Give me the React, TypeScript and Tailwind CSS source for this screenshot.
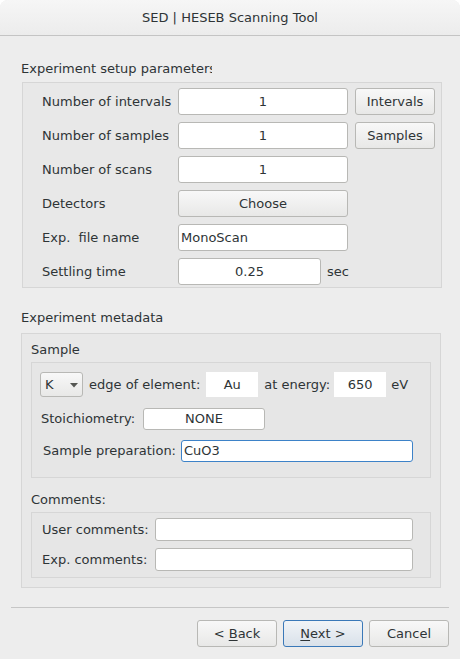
import type { ReactNode } from "react";

type Row = {
  label: string;
  value: string;
  width: number;
  kind: "field" | "button";
  align?: "center" | "left";
  extra?: ReactNode;
};

function Field({
  w,
  h,
  children,
  left,
  focus,
}: {
  w: number;
  h: number;
  children?: ReactNode;
  left?: boolean;
  focus?: boolean;
}) {
  return (
    <div
      className={
        "flex items-center rounded-[3px] border bg-white " +
        (focus ? "border-[#3d82c8] " : "border-[#b8b8b5] ") +
        (left ? "justify-start pl-[2px]" : "justify-center")
      }
      style={{ width: w, height: h }}
    >
      {children}
    </div>
  );
}

function Btn({
  w,
  h,
  children,
  primary,
}: {
  w: number;
  h: number;
  children: ReactNode;
  primary?: boolean;
}) {
  return (
    <div
      className={
        "flex items-center justify-center rounded-[3px] border " +
        (primary
          ? "border-[#3a78b8] bg-linear-to-b from-[#f1f4f7] to-[#d9e1ea]"
          : "border-[#b8b8b5] bg-linear-to-b from-[#f8f8f8] to-[#e8e8e7]")
      }
      style={{ width: w, height: h }}
    >
      {children}
    </div>
  );
}

export default function App() {
  const rows: Row[] = [
    { label: "Number of intervals", value: "1", width: 170, kind: "field", extra: <div className="ml-[7px]"><Btn w={80} h={27}>Intervals</Btn></div> },
    { label: "Number of samples", value: "1", width: 170, kind: "field", extra: <div className="ml-[7px]"><Btn w={80} h={27}>Samples</Btn></div> },
    { label: "Number of scans", value: "1", width: 170, kind: "field" },
    { label: "Detectors", value: "Choose", width: 170, kind: "button" },
    { label: "Exp.  file name", value: "MonoScan", width: 170, kind: "field", align: "left" },
    { label: "Settling time", value: "0.25", width: 143, kind: "field", extra: <span className="ml-[6px]">sec</span> },
  ];

  return (
    <div className="h-[659px] w-[460px] bg-white font-['DejaVu_Sans',sans-serif] text-[13px] leading-[16px] text-[#2e3436]">
      <div className="flex h-full flex-col overflow-hidden rounded-t-[8px] bg-[#ededed]">
        <div className="flex h-[36px] shrink-0 items-center justify-center border-b border-[#c4c4c4] bg-linear-to-b from-[#f6f6f6] to-[#ececec] pt-[1px]">
          SED | HESEB Scanning Tool
        </div>

        {/* setup parameters */}
        <div className="ml-[21px] mt-[25px] w-[191px] overflow-hidden whitespace-nowrap">
          Experiment setup parameters
        </div>
        <div className="ml-[22px] mt-[5px] flex h-[206px] w-[420px] flex-col gap-[7px] border border-[#d6d6d6] bg-[#e8e8e8] pl-[19px] pt-[5px]">
          {rows.map((r) => (
            <div key={r.label} className="flex h-[27px] items-center">
              <span className="w-[136px] whitespace-pre">{r.label}</span>
              {r.kind === "field" ? (
                <Field w={r.width} h={27} left={r.align === "left"}>
                  {r.value}
                </Field>
              ) : (
                <Btn w={r.width} h={27}>
                  {r.value}
                </Btn>
              )}
              {r.extra}
            </div>
          ))}
        </div>

        {/* metadata */}
        <div className="ml-[21px] mt-[22px]">Experiment metadata</div>
        <div className="ml-[21px] mt-[7px] flex h-[255px] w-[420px] flex-col border border-[#d6d6d6] bg-[#e8e8e8] pl-[9px] pt-[8px]">
          <div>Sample</div>
          <div className="mt-[4px] flex h-[116px] w-[400px] flex-col border border-[#d6d6d6] bg-[#e6e6e6] pt-[9px]">
            <div className="ml-[8px] flex h-[25px] items-center">
              <div className="relative flex h-[25px] w-[43px] items-center rounded-[3px] border border-[#b8b8b5] bg-linear-to-b from-[#f8f8f8] to-[#e8e8e7] pl-[4px]">
                K
                <svg className="absolute left-[29px] top-[10px]" width="8" height="5" viewBox="0 0 8 5">
                  <path d="M0 0 L8 0 L4 4.5 Z" fill="#555753" />
                </svg>
              </div>
              <span className="ml-[6px]">edge of element:</span>
              <div className="ml-[6px] flex h-[25px] w-[52px] items-center justify-center bg-white">Au</div>
              <span className="ml-[6px]">at energy:</span>
              <div className="ml-[4px] flex h-[25px] w-[52px] items-center justify-center bg-white">650</div>
              <span className="ml-[5px]">eV</span>
            </div>
            <div className="ml-[9px] mt-[11px] flex h-[22px] items-center">
              <span className="w-[102px]">Stoichiometry:</span>
              <Field w={122} h={22}>NONE</Field>
            </div>
            <div className="ml-[11px] mt-[10px] flex h-[22px] items-center">
              <span className="w-[138px]">Sample preparation:</span>
              <Field w={232} h={22} left focus>
                CuO3
              </Field>
            </div>
          </div>

          <div className="mt-[14px]">Comments:</div>
          <div className="mt-[4px] flex h-[66px] w-[400px] flex-col gap-[7px] border border-[#d6d6d6] bg-[#e6e6e6] pl-[10px] pt-[5px]">
            <div className="flex h-[23px] items-center">
              <span className="w-[113px]">User comments:</span>
              <Field w={258} h={23} />
            </div>
            <div className="flex h-[23px] items-center">
              <span className="w-[113px]">Exp. comments:</span>
              <Field w={258} h={23} />
            </div>
          </div>
        </div>

        <div className="ml-[11px] mt-[19px] h-px w-[438px] bg-[#c6c6c6]" />

        <div className="mt-[12px] flex justify-end gap-[6px] pr-[11px]">
          <Btn w={80} h={27}>
            <span>
              &lt; <span className="underline underline-offset-2">B</span>ack
            </span>
          </Btn>
          <Btn w={80} h={27} primary>
            <span>
              <span className="underline underline-offset-2">N</span>ext &gt;
            </span>
          </Btn>
          <Btn w={80} h={27}>Cancel</Btn>
        </div>
      </div>
    </div>
  );
}
